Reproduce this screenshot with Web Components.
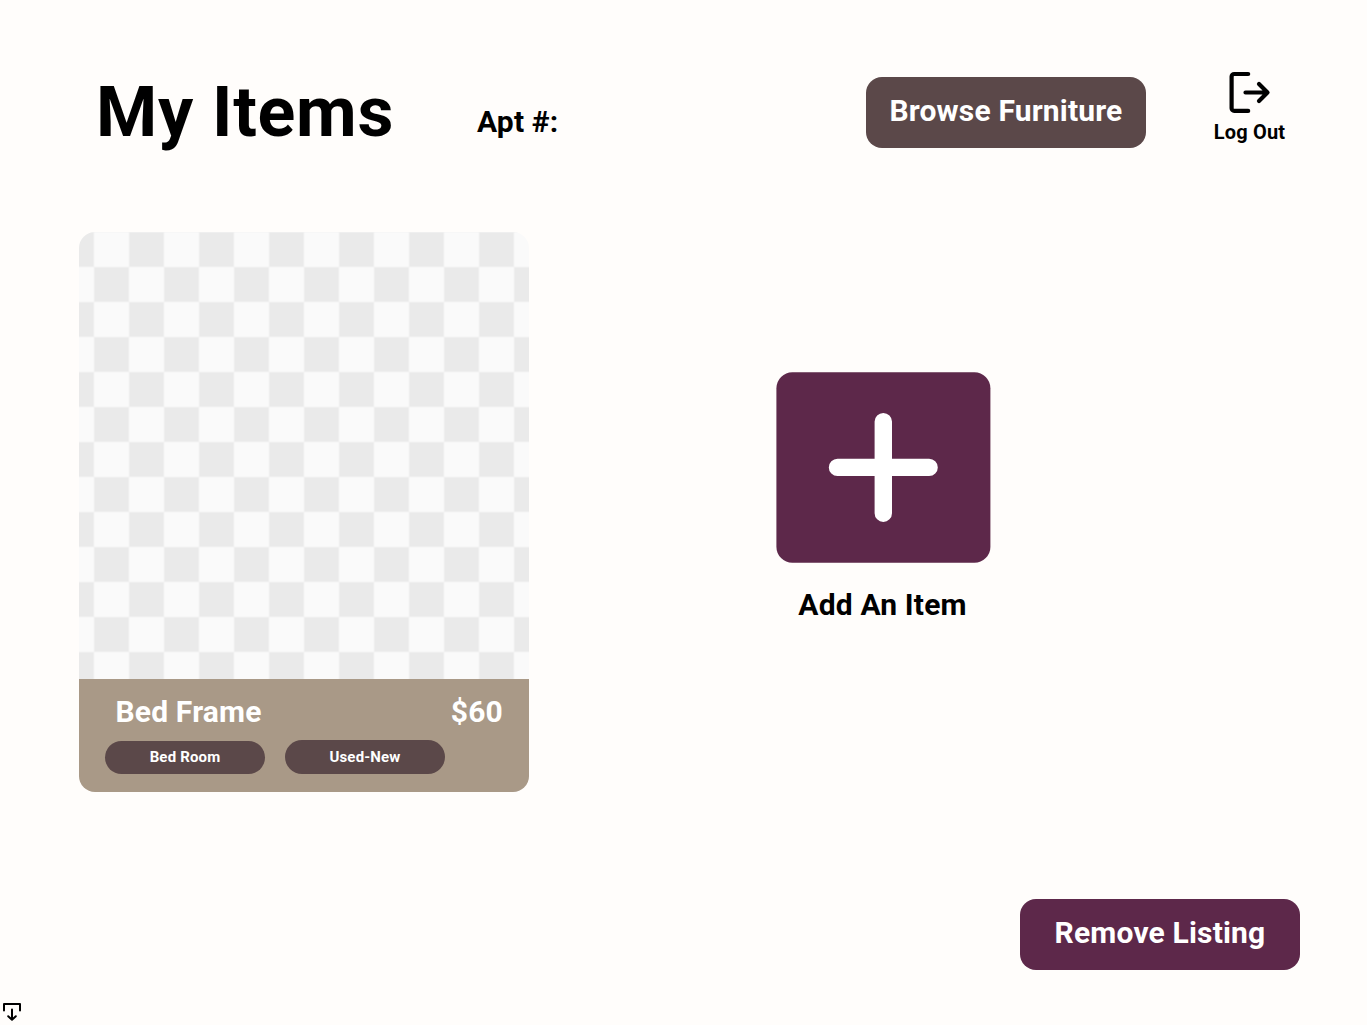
<!DOCTYPE html>
<html lang="en">
<head>
  <meta charset="UTF-8">
  <title>My Items</title>
  <style>
    body {
      margin: 0;
      background-color: #fffdfb;
      color: black;
      font-family: Roboto, "Liberation Sans", sans-serif;
      font-weight: 700;
      letter-spacing: 0.17px;
    }
  </style>
</head>
<body>
  <items-page></items-page>

  <script>
    class PageHeader extends HTMLElement {
      connectedCallback() {
        this.attachShadow({ mode: 'open' });
        this.shadowRoot.innerHTML = `
          <style>
            :host {
              display: flex;
              align-items: flex-start;
              height: 161px;
              padding: 71px 81px 0 96px;
              box-sizing: border-box;
            }
            h1 {
              margin: 0;
              font-size: 70px;
              line-height: 82px;
              letter-spacing: 0.7px;
              width: 381px;
              white-space: nowrap;
            }
            .apt {
              flex: 1;
              margin-top: 33px;
              font-size: 30px;
              line-height: 35px;
            }
            app-button {
              margin: 6px 67px 0 0;
            }
          </style>
          <h1><slot></slot></h1>
          <div class="apt">Apt #:</div>
          <app-button>Browse Furniture</app-button>
          <logout-link></logout-link>
        `;
      }
    }
    customElements.define('page-header', PageHeader);

    class AppButton extends HTMLElement {
      connectedCallback() {
        this.attachShadow({ mode: 'open' });
        this.shadowRoot.innerHTML = `
          <style>
            :host {
              display: block;
            }
            button {
              display: block;
              width: 280px;
              height: 71px;
              padding: 0 0 4px;
              border: none;
              border-radius: 16px;
              background-color: #5b4849;
              color: white;
              font: inherit;
              font-size: 30px;
              line-height: 35px;
              letter-spacing: inherit;
              cursor: pointer;
            }
            :host([variant="danger"]) button {
              background-color: #5d284a;
            }
          </style>
          <button><slot></slot></button>
        `;
      }
    }
    customElements.define('app-button', AppButton);

    class LogoutLink extends HTMLElement {
      connectedCallback() {
        this.attachShadow({ mode: 'open' });
        this.shadowRoot.innerHTML = `
          <style>
            :host {
              display: flex;
              flex-direction: column;
              align-items: center;
              width: 73px;
              font-size: 20px;
              line-height: 23px;
              white-space: nowrap;
              cursor: pointer;
            }
            svg {
              display: block;
              margin-bottom: 6px;
            }
          </style>
          <svg width="42" height="44" viewBox="0 0 42 44" fill="none" stroke="black" stroke-width="4.2" stroke-linecap="round" stroke-linejoin="round">
            <path d="M19.2 3H5.2a2.6 2.6 0 0 0-2.6 2.6v31.7a2.6 2.6 0 0 0 2.6 2.6h14"/>
            <path d="M16.5 21.5h22M30 13l8.500 8.500L30 30"/>
          </svg>
          <span>Log Out</span>
        `;
      }
    }
    customElements.define('logout-link', LogoutLink);

    class TagPill extends HTMLElement {
      connectedCallback() {
        this.attachShadow({ mode: 'open' });
        this.shadowRoot.innerHTML = `
          <style>
            :host {
              display: block;
              width: 160px;
              height: 33px;
              border-radius: 17px;
              background-color: #5b4849;
              color: white;
              font-size: 15px;
              line-height: 33px;
              text-align: center;
            }
          </style>
          <slot></slot>
        `;
      }
    }
    customElements.define('tag-pill', TagPill);

    class ItemCard extends HTMLElement {
      connectedCallback() {
        this.attachShadow({ mode: 'open' });
        this.shadowRoot.innerHTML = `
          <style>
            :host {
              display: block;
              width: 450px;
              border-radius: 16px;
              overflow: hidden;
            }
            /* empty photo: checkerboard with soft seams */
            .photo {
              height: 447px;
              background:
                linear-gradient(90deg, #f3f3f3 1px, transparent 1px) 14.5px 0 / 35px 35px,
                linear-gradient(#f3f3f3 1px, transparent 1px) 0 -0.5px / 35px 35px,
                conic-gradient(#eaeaea 25%, #fafafa 0 50%, #eaeaea 0 75%, #fafafa 0) 15px 0 / 70px 70px;
            }
            .info {
              height: 113px;
              padding: 15px 26px 0;
              box-sizing: border-box;
              background-color: #a99987;
              color: white;
            }
            .row {
              display: flex;
              justify-content: space-between;
              padding-left: 10.5px;
              font-size: 30px;
              line-height: 35px;
            }
            .tags {
              display: flex;
              gap: 20px;
              margin-top: 11px;
            }
            .tags tag-pill:first-child {
              margin-top: 1px;
            }
            .tags tag-pill:last-child {
              height: 33.5px;
              line-height: 34px;
            }
          </style>
          <div class="photo"></div>
          <div class="info">
            <div class="row">
              <slot name="name"></slot>
              <slot name="price"></slot>
            </div>
            <div class="tags">
              <tag-pill>${this.getAttribute('room')}</tag-pill>
              <tag-pill>${this.getAttribute('condition')}</tag-pill>
            </div>
          </div>
        `;
      }
    }
    customElements.define('item-card', ItemCard);

    class AddItem extends HTMLElement {
      connectedCallback() {
        this.attachShadow({ mode: 'open' });
        this.shadowRoot.innerHTML = `
          <style>
            :host {
              display: flex;
              flex-direction: column;
              align-items: center;
              width: 215px;
              font-size: 30px;
              line-height: 35px;
            }
            svg {
              display: block;
              margin-bottom: 24px;
              cursor: pointer;
            }
            span {
              margin-right: 2px;
            }
          </style>
          <svg width="215" height="191" viewBox="0 0 215 191">
            <rect x="0.4" y="0.3" width="214" height="190.400" rx="16" fill="#5d284a"/>
            <path d="M107.300 49.600v91.600M61.500 95.400h91.600" stroke="white" stroke-width="17.400" stroke-linecap="round"/>
          </svg>
          <span><slot></slot></span>
        `;
      }
    }
    customElements.define('add-item', AddItem);

    class PageFooter extends HTMLElement {
      connectedCallback() {
        this.attachShadow({ mode: 'open' });
        this.shadowRoot.innerHTML = `
          <style>
            :host {
              display: flex;
              justify-content: space-between;
              align-items: flex-end;
              height: 126px;
              padding-right: 67px;
            }
            svg {
              display: block;
              margin: 0 0 3px 2px;
            }
            app-button {
              align-self: flex-start;
            }
          </style>
          <svg width="20" height="20" viewBox="0 0 20 20" fill="none" stroke="black" stroke-width="2" stroke-linecap="round" stroke-linejoin="round">
            <path d="M2 8.500V2h16v6.500"/>
            <path d="M10 7.500v10M6.200 14.200l3.800 3.600 3.800-3.600"/>
          </svg>
          <app-button variant="danger"><slot></slot></app-button>
        `;
      }
    }
    customElements.define('page-footer', PageFooter);

    class ItemsPage extends HTMLElement {
      connectedCallback() {
        this.attachShadow({ mode: 'open' });
        this.shadowRoot.innerHTML = `
          <style>
            :host {
              display: flex;
              flex-direction: column;
              width: 1367px;
              height: 1025px;
              overflow: hidden;
            }
            main {
              display: flex;
              flex: 1;
              align-items: flex-start;
              padding: 71px 79px 0;
            }
            add-item {
              margin: 140px 0 0 247px;
            }
          </style>
          <page-header>My Items</page-header>
          <main>
            <item-card room="Bed Room" condition="Used-New">
              <span slot="name">Bed Frame</span>
              <span slot="price">$60</span>
            </item-card>
            <add-item>Add An Item</add-item>
          </main>
          <page-footer>Remove Listing</page-footer>
        `;
      }
    }
    customElements.define('items-page', ItemsPage);
  </script>
</body>
</html>
